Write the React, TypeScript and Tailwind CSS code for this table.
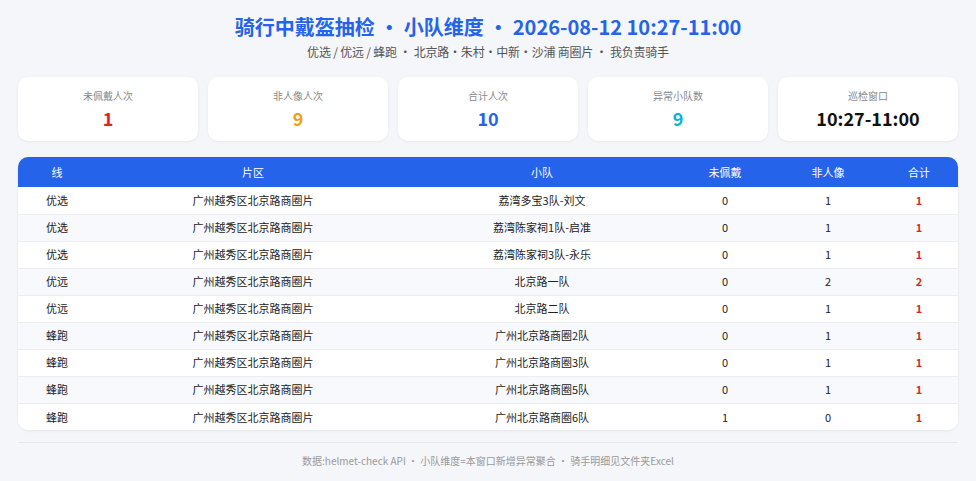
import React from "react";

const rows = [
  ["优选", "广州越秀区北京路商圈片", "荔湾多宝3队-刘文", 0, 1, 1],
  ["优选", "广州越秀区北京路商圈片", "荔湾陈家祠1队-启准", 0, 1, 1],
  ["优选", "广州越秀区北京路商圈片", "荔湾陈家祠3队-永乐", 0, 1, 1],
  ["优远", "广州越秀区北京路商圈片", "北京路一队", 0, 2, 2],
  ["优远", "广州越秀区北京路商圈片", "北京路二队", 0, 1, 1],
  ["蜂跑", "广州越秀区北京路商圈片", "广州北京路商圈2队", 0, 1, 1],
  ["蜂跑", "广州越秀区北京路商圈片", "广州北京路商圈3队", 0, 1, 1],
  ["蜂跑", "广州越秀区北京路商圈片", "广州北京路商圈5队", 0, 1, 1],
  ["蜂跑", "广州越秀区北京路商圈片", "广州北京路商圈6队", 1, 0, 1],
];

const cards = [
  { label: "未佩戴人次", value: "1", cls: "text-[#dc2626]" },
  { label: "非人像人次", value: "9", cls: "text-[#f59e0b]" },
  { label: "合计人次", value: "10", cls: "text-[#2563eb]" },
  { label: "异常小队数", value: "9", cls: "text-[#06b6d4]" },
  { label: "巡检窗口", value: "10:27-11:00", cls: "text-[#111111]" },
];

export default function App() {
  return (
    <div
      className="min-h-[481px] w-[976px] bg-[#f4f6fa] px-[18px] pt-[15px]"
      style={{ fontFamily: '"Noto Sans CJK SC", "Noto Sans", sans-serif' }}
    >
      <h1 className="text-center text-[20px] font-bold leading-[24px] text-[#2563eb]">
        骑行中戴盔抽检 · 小队维度 · 2026-08-12 10:27-11:00
      </h1>
      <div className="mt-[5px] text-center text-[12px] leading-[16px] tracking-[-0.2px] text-[#555]">
        优选 / 优远 / 蜂跑 · 北京路·朱村·中新·沙浦 商圈片 · 我负责骑手
      </div>

      <div className="mt-[17px] grid grid-cols-5 gap-[10px]">
        {cards.map((c) => (
          <div
            key={c.label}
            className="flex h-[64px] flex-col items-center rounded-[10px] bg-white pt-[11px] shadow-[0_1px_3px_rgba(0,0,0,0.06)]"
          >
            <div className="text-[10px] leading-[16px] text-[#888]">{c.label}</div>
            <div className={`mt-[2px] text-[18px] font-bold leading-[24px] ${c.cls}`}>
              {c.value}
            </div>
          </div>
        ))}
      </div>

      <div className="mt-[16px] overflow-hidden rounded-[10px] bg-white shadow-[0_1px_3px_rgba(0,0,0,0.07)]">
        <table className="w-full table-fixed border-collapse text-[11px] text-[#222]">
          <colgroup>
            <col className="w-[78px]" />
            <col className="w-[314px]" />
            <col className="w-[264px]" />
            <col className="w-[102px]" />
            <col className="w-[104px]" />
            <col className="w-[78px]" />
          </colgroup>
          <thead>
            <tr className="h-[30px] bg-[#2563eb] text-white">
              <th className="font-normal">线</th>
              <th className="font-normal">片区</th>
              <th className="font-normal">小队</th>
              <th className="font-normal">未佩戴</th>
              <th className="font-normal">非人像</th>
              <th className="font-normal">合计</th>
            </tr>
          </thead>
          <tbody>
            {rows.map((r, i) => (
              <tr
                key={i}
                className={`h-[27px] ${i < rows.length - 1 ? "border-b border-[#eceef2]" : ""} ${
                  i % 2 === 1 ? "bg-[#f8f9fc]" : "bg-white"
                }`}
              >
                <td className="text-center">{r[0]}</td>
                <td className="text-center">{r[1]}</td>
                <td className="text-center">{r[2]}</td>
                <td className="text-center">{r[3]}</td>
                <td className="text-center">{r[4]}</td>
                <td className="text-center font-bold text-[#dc2626]">{r[5]}</td>
              </tr>
            ))}
          </tbody>
        </table>
      </div>

      <div className="mt-[12px] border-t border-[#e5e7eb] pt-[10px] text-center text-[10px] leading-[16px] text-[#999]">
        数据:helmet-check API · 小队维度=本窗口新增异常聚合 · 骑手明细见文件夹Excel
      </div>
    </div>
  );
}
